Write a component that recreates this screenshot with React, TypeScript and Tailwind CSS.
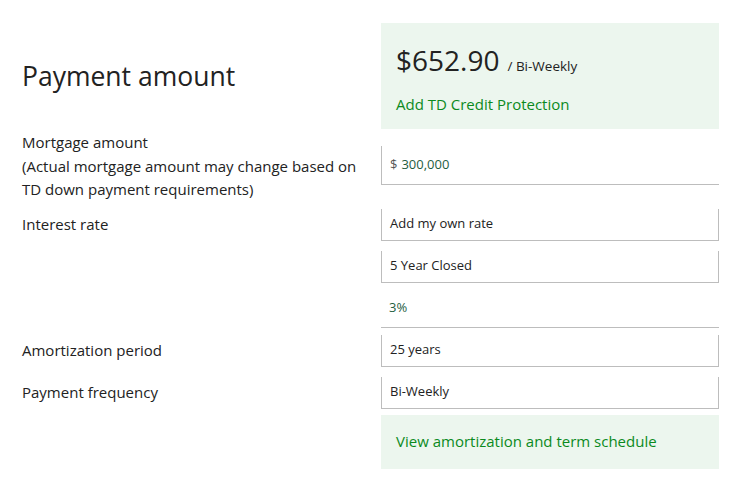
const font = "font-['Open_Sans','Noto_Sans',sans-serif]";

function Field({ children, className = "" }: { children: React.ReactNode; className?: string }) {
  return (
    <div
      className={`flex items-center h-[32px] pl-[8px] border-l border-r border-b border-[#bdbdbd] text-[13px] text-[#222] ${className}`}
    >
      {children}
    </div>
  );
}

export default function App() {
  return (
    <div className={`${font} w-[733px] h-[477px] bg-white pl-[22px] pr-[14px] pt-[23px] text-[#222]`}>
      {/* payment */}
      <div className="flex">
        <div className="w-[359px] flex items-center">
          <h1 className="text-[26.5px] leading-none font-normal">Payment amount</h1>
        </div>
        <div className="w-[338px] h-[106px] bg-[#ecf6ee] pl-[15px] pt-[19px]">
          <div className="flex items-baseline">
            <span className="text-[28px] leading-[36px]">$652.90</span>
            <span className="text-[13.5px] ml-[8px]">/ Bi-Weekly</span>
          </div>
          <a className="block mt-[15px] text-[15px] text-[#0b8a1d]">Add TD Credit Protection</a>
        </div>
      </div>

      {/* mortgage */}
      <div className="flex mt-[2px]">
        <div className="w-[359px] text-[15px] leading-[23.5px]">
          Mortgage amount
          <br />
          (Actual mortgage amount may change based on
          <br />
          TD down payment requirements)
        </div>
        <div className="w-[338px] pt-[15px]">
          <div className="flex items-center h-[39px] pl-[8px] border-l border-b border-[#bdbdbd] text-[13px]">
            <span className="text-[#555]">$</span>
            <span className="ml-[4px] text-[#1f5e3f]">300,000</span>
          </div>
        </div>
      </div>

      {/* interest rate */}
      <div className="flex mt-[7px]">
        <div className="w-[359px] text-[15px] leading-[23px] pt-[4px]">Interest rate</div>
        <div className="w-[338px]">
          <Field>Add my own rate</Field>
          <Field className="mt-[10px]">5 Year Closed</Field>
          <div className="flex items-center h-[38px] mt-[7px] pl-[8px] border-b border-[#bdbdbd] text-[13px] text-[#1f5e3f]">
            3%
          </div>
        </div>
      </div>

      {/* amortization */}
      <div className="flex mt-[7px]">
        <div className="w-[359px] flex items-center text-[15px]">Amortization period</div>
        <div className="w-[338px]">
          <Field>25 years</Field>
        </div>
      </div>

      <div className="flex mt-[10px]">
        <div className="w-[359px] flex items-center text-[15px]">Payment frequency</div>
        <div className="w-[338px]">
          <Field>Bi-Weekly</Field>
        </div>
      </div>

      <div className="flex mt-[6px]">
        <div className="w-[359px]" />
        <div className="w-[338px] h-[54px] bg-[#ecf6ee] pl-[15px] flex items-center">
          <a className="text-[15px] text-[#0b8a1d]">View amortization and term schedule</a>
        </div>
      </div>
    </div>
  );
}
